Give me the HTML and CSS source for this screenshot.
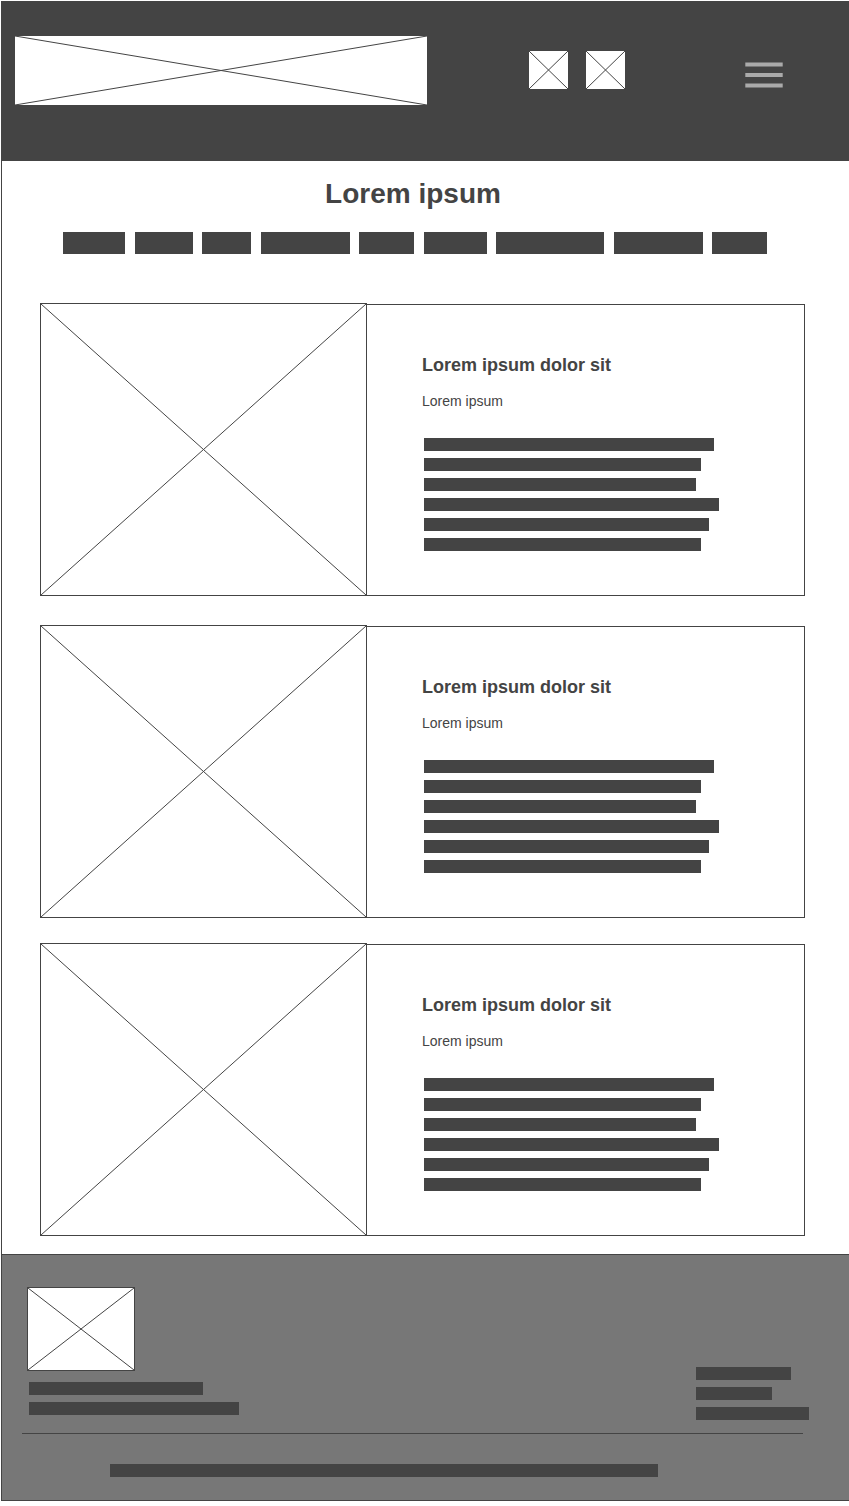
FILE: index.html
```html
<!DOCTYPE html>
<html lang="en">
<head>
<meta charset="utf-8">
<meta name="viewport" content="width=device-width, initial-scale=1">
<title>Lorem ipsum</title>
<link rel="stylesheet" href="styles.css">
</head>
<body>
<div class="page">
  <header class="header">
    <svg class="placeholder logo" aria-hidden="true"><line x1="0" y1="0" x2="100%" y2="100%"/><line x1="100%" y1="0" x2="0" y2="100%"/></svg>
    <div class="actions">
      <a class="action" href="#" aria-label="First link"><svg class="placeholder action-icon" aria-hidden="true"><line x1="0" y1="0" x2="100%" y2="100%"/><line x1="100%" y1="0" x2="0" y2="100%"/></svg></a>
      <a class="action" href="#" aria-label="Second link"><svg class="placeholder action-icon" aria-hidden="true"><line x1="0" y1="0" x2="100%" y2="100%"/><line x1="100%" y1="0" x2="0" y2="100%"/></svg></a>
    </div>
    <button class="menu" type="button" aria-label="Menu">
      <svg class="menu-icon" viewBox="0 0 38 26" aria-hidden="true"><path d="M.3.5h37.4v4H.3zM.3 11h37.4v4H.3zM.3 21.5h37.4v4H.3z"/></svg>
    </button>
  </header>

  <main>
    <h1 class="title">Lorem ipsum</h1>
    <nav class="nav" aria-label="Sections">
      <a class="tab tab-62" href="#" aria-label="Section 1"></a>
      <a class="tab tab-58" href="#" aria-label="Section 2"></a>
      <a class="tab tab-49" href="#" aria-label="Section 3"></a>
      <a class="tab tab-89" href="#" aria-label="Section 4"></a>
      <a class="tab tab-55" href="#" aria-label="Section 5"></a>
      <a class="tab tab-63" href="#" aria-label="Section 6"></a>
      <a class="tab tab-108" href="#" aria-label="Section 7"></a>
      <a class="tab tab-89" href="#" aria-label="Section 8"></a>
      <a class="tab tab-55" href="#" aria-label="Section 9"></a>
    </nav>

    <div class="cards">
      <article class="card card-lead">
        <svg class="placeholder card-image" aria-hidden="true"><line x1="0" y1="0" x2="100%" y2="100%"/><line x1="100%" y1="0" x2="0" y2="100%"/></svg>
        <div class="card-body">
          <h2 class="card-title">Lorem ipsum dolor sit</h2>
          <p class="card-subtitle">Lorem ipsum</p>
          <div class="lines card-lines"><span class="line line-290"></span><span class="line line-277"></span><span class="line line-272"></span><span class="line line-295"></span><span class="line line-285"></span><span class="line line-277"></span></div>
        </div>
      </article>
      <article class="card">
        <svg class="placeholder card-image" aria-hidden="true"><line x1="0" y1="0" x2="100%" y2="100%"/><line x1="100%" y1="0" x2="0" y2="100%"/></svg>
        <div class="card-body">
          <h2 class="card-title">Lorem ipsum dolor sit</h2>
          <p class="card-subtitle">Lorem ipsum</p>
          <div class="lines card-lines"><span class="line line-290"></span><span class="line line-277"></span><span class="line line-272"></span><span class="line line-295"></span><span class="line line-285"></span><span class="line line-277"></span></div>
        </div>
      </article>
      <article class="card">
        <svg class="placeholder card-image" aria-hidden="true"><line x1="0" y1="0" x2="100%" y2="100%"/><line x1="100%" y1="0" x2="0" y2="100%"/></svg>
        <div class="card-body">
          <h2 class="card-title">Lorem ipsum dolor sit</h2>
          <p class="card-subtitle">Lorem ipsum</p>
          <div class="lines card-lines"><span class="line line-290"></span><span class="line line-277"></span><span class="line line-272"></span><span class="line line-295"></span><span class="line line-285"></span><span class="line line-277"></span></div>
        </div>
      </article>
    </div>
  </main>

  <footer class="footer">
    <div class="footer-top">
      <div class="brand">
        <svg class="placeholder brand-image" aria-hidden="true"><line x1="0" y1="0" x2="100%" y2="100%"/><line x1="100%" y1="0" x2="0" y2="100%"/></svg>
        <div class="lines brand-lines"><span class="line line-174"></span><span class="line line-210"></span></div>
      </div>
      <div class="lines contact"><span class="line line-95"></span><span class="line line-76"></span><span class="line line-113"></span></div>
    </div>
    <hr class="divider">
    <div class="lines legal"><span class="line line-548"></span></div>
  </footer>
</div>
</body>
</html>
```

FILE: styles.css
```css
:root {
  --ink: #444;
  --footer: #777;
  --menu: #aaa;
}

*, *::before, *::after { box-sizing: border-box; }

body {
  margin: 1px 0 0 1px;
  background: #fff;
  color: var(--ink);
  font-family: "Liberation Sans", Arial, sans-serif;
}

h1, h2, p { margin: 0; }

.page { border-left: 1px solid var(--ink); }

.placeholder {
  display: block;
  border: 1px solid var(--ink);
  background: #fff;
  stroke: var(--ink);
  stroke-width: 1;
}

/* Header */
.header {
  display: flex;
  align-items: center;
  padding: 34px 54px 55px 12px;
  background: var(--ink);
}
.logo { flex: 0 1 414px; min-width: 0; height: 71px; }
.actions { display: flex; gap: 16px; margin-left: 100px; padding-bottom: 1px; }
.action { display: block; }
.action-icon { width: 41px; height: 40px; }
.menu {
  display: grid;
  place-items: center;
  align-self: flex-end;
  width: 62px;
  height: 62px;
  margin-left: auto;
  padding: 0;
  border: 0;
  background: none;
  cursor: pointer;
}
.menu-icon { width: 38px; height: 26px; fill: var(--menu); }

/* Title and navigation */
.title {
  padding: 17px 25px 0 0;
  font-size: 28px;
  line-height: 32px;
  text-align: center;
}
.nav {
  display: flex;
  justify-content: space-between;
  padding: 22px 82px 0 61px;
}
.tab { height: 22px; background: var(--ink); }
.tab-49 { width: 49px; }
.tab-55 { width: 55px; }
.tab-58 { width: 58px; }
.tab-62 { width: 62px; }
.tab-63 { width: 63px; }
.tab-89 { width: 89px; }
.tab-108 { width: 108px; }

/* Cards */
.cards {
  display: flex;
  flex-direction: column;
  gap: 25px;
  padding: 49px 44px 18px 38px;
}
.card { display: grid; grid-template-columns: 327fr 438fr; }
.card-lead { margin-bottom: 4px; }
.card-image { width: 100%; height: 100%; }
.card-body {
  margin-top: 1px;
  padding: 49px 20px 44px 55px;
  border: 1px solid var(--ink);
  border-left: 0;
}
.card-title { font-size: 18px; line-height: 22px; }
.card-subtitle { margin-top: 17px; font-size: 14px; line-height: 16px; }

/* Text stand-in bars */
.lines { display: flex; flex-direction: column; gap: 7px; }
.line { height: 13px; max-width: 100%; background: var(--ink); }
.card-lines { margin-top: 29px; padding-left: 2px; }
.line-76 { width: 76px; }
.line-95 { width: 95px; }
.line-113 { width: 113px; }
.line-174 { width: 174px; }
.line-210 { width: 210px; }
.line-272 { width: 272px; }
.line-277 { width: 277px; }
.line-285 { width: 285px; }
.line-290 { width: 290px; }
.line-295 { width: 295px; }
.line-548 { width: 548px; }

/* Footer */
.footer {
  padding-bottom: 23px;
  border: solid var(--ink);
  border-width: 1px 0;
  background: var(--footer);
}
.footer-top {
  display: flex;
  justify-content: space-between;
  align-items: flex-end;
  padding: 32px 40px 13px 25px;
}
.brand { padding-bottom: 5px; }
.brand-image { width: 108px; height: 84px; }
.brand-lines { padding: 11px 0 0 2px; }
.divider {
  height: 1px;
  margin: 0 46px 0 20px;
  border: 0;
  background: var(--ink);
}
.legal { padding: 30px 20px 0 108px; }
```
